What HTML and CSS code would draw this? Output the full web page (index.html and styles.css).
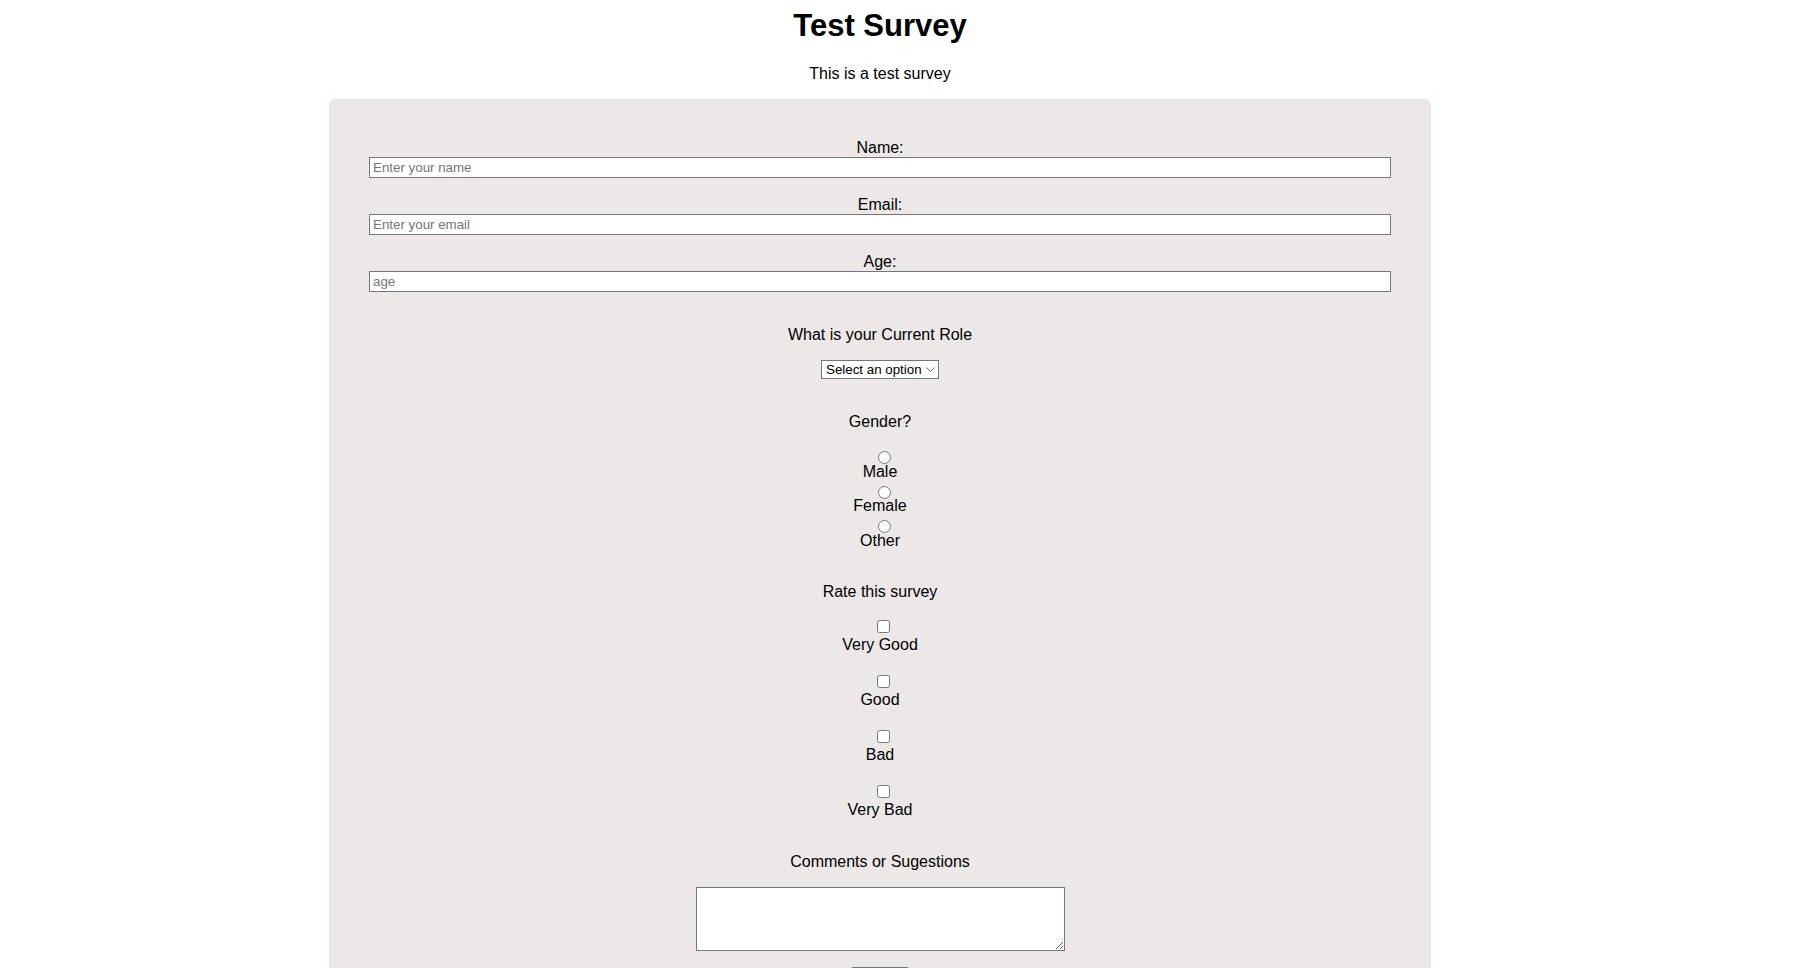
FILE: index.html
```html
<!DOCTYPE html>
<html lang="en">
<head>
<meta charset="utf-8">
<title>Test Survey</title>
<link rel="stylesheet" href="styles.css">
</head>
<body>
<div class="page">
  <header class="header">
    <h1 class="title">Test Survey</h1>
    <p class="description">This is a test survey</p>
  </header>
  <form class="survey">
    <div class="field">
      <label class="field-label" for="name">Name:</label>
      <input class="text-input" id="name" type="text" placeholder="Enter your name">
    </div>
    <div class="field">
      <label class="field-label" for="email">Email:</label>
      <input class="text-input" id="email" type="email" placeholder="Enter your email">
    </div>
    <div class="field">
      <label class="field-label" for="age">Age:</label>
      <input class="text-input" id="age" type="number" placeholder="age">
    </div>

    <div class="question question-role">
      <p class="question-title">What is your Current Role</p>
      <span class="select-wrap">
        <select class="select" id="role">
          <option>Select an option</option>
          <option>Student</option>
          <option>Full Time Job</option>
          <option>Other</option>
        </select>
        <svg class="chevron" width="9" height="5" viewBox="0 0 9 5" aria-hidden="true"><polyline points="0.5,0.5 4.5,4.5 8.5,0.5" fill="none" stroke="#6e6e6e" stroke-width="1"/></svg>
      </span>
    </div>

    <div class="question question-gender">
      <p class="question-title title-gender">Gender?</p>
      <div class="options options-radio">
        <label class="option option-radio"><input class="radio" type="radio" name="gender" value="male"><span class="option-text">Male</span></label>
        <label class="option option-radio"><input class="radio" type="radio" name="gender" value="female"><span class="option-text">Female</span></label>
        <label class="option option-radio"><input class="radio" type="radio" name="gender" value="other"><span class="option-text">Other</span></label>
      </div>
    </div>

    <div class="question question-rate">
      <p class="question-title title-rate">Rate this survey</p>
      <div class="options options-check">
        <label class="option option-check"><input class="checkbox" type="checkbox" value="very-good"><span class="option-text">Very Good</span></label>
        <label class="option option-check"><input class="checkbox" type="checkbox" value="good"><span class="option-text">Good</span></label>
        <label class="option option-check"><input class="checkbox" type="checkbox" value="bad"><span class="option-text">Bad</span></label>
        <label class="option option-check"><input class="checkbox" type="checkbox" value="very-bad"><span class="option-text">Very Bad</span></label>
      </div>
    </div>

    <div class="question question-comments">
      <p class="question-title title-comments">Comments or Sugestions</p>
      <textarea class="textarea" id="comments"></textarea>
    </div>

    <button class="submit" type="submit">Submit</button>
  </form>
</div>
</body>
</html>
```

FILE: styles.css
```css
html {
  scrollbar-width: none;
}

body {
  margin: 0;
  background: #ffffff;
  color: #000000;
  font-family: "Liberation Sans", Arial, sans-serif;
  font-size: 16px;
}

.page {
  width: 1760px;
  padding-bottom: 40px;
}

.header {
  padding-top: 8px;
  text-align: center;
}

.title {
  margin: 0 0 20.5px;
  font-size: 31px;
  line-height: 36px;
  font-weight: 700;
}

.description {
  margin: 0 0 16.5px;
  line-height: 18px;
}

.survey {
  box-sizing: border-box;
  width: 1102px;
  margin: 0 auto;
  padding: 39px 40px 40px;
  background: #ece8e7;
  border-radius: 6px;
  display: flex;
  flex-direction: column;
  align-items: center;
  text-align: center;
}

.field {
  width: 100%;
  display: flex;
  flex-direction: column;
  margin-bottom: 17px;
}

.field:nth-child(3) {
  margin-bottom: 0;
}

.field-label {
  display: block;
  line-height: 19px;
}

.text-input {
  box-sizing: border-box;
  width: 100%;
  height: 21px;
  margin: 0;
  padding: 0 3px;
  border: 1px solid #767676;
  border-radius: 0;
  background: #ffffff;
  font-family: "Liberation Sans", Arial, sans-serif;
  font-size: 13.333px;
  color: #000;
  outline: none;
  -moz-appearance: textfield;
}

.text-input::-webkit-outer-spin-button,
.text-input::-webkit-inner-spin-button {
  -webkit-appearance: none;
  margin: 0;
}

.text-input::placeholder {
  color: #757575;
}

.question {
  display: flex;
  flex-direction: column;
  align-items: center;
}

.question-title {
  margin: 0 0 16px;
  line-height: 18px;
}

.question-role {
  margin-top: 34px;
}

.select-wrap {
  position: relative;
  display: inline-block;
  height: 19px;
}

.select {
  box-sizing: border-box;
  -webkit-appearance: none;
  appearance: none;
  display: block;
  width: 118px;
  height: 19px;
  margin: 0;
  padding: 0 0 0 4px;
  border: 1px solid #767676;
  border-radius: 0;
  background: #ffffff;
  font-family: "Liberation Sans", Arial, sans-serif;
  font-size: 13.333px;
  color: #000;
  outline: none;
}

.chevron {
  position: absolute;
  right: 4px;
  top: 7px;
  pointer-events: none;
}

.question-gender {
  margin-top: 34px;
}

.title-gender {
  margin-bottom: 20px;
}

.options {
  display: flex;
  flex-direction: column;
  align-items: center;
}

.options-radio {
  gap: 5px;
}

.options-check {
  gap: 21px;
}

.option {
  display: flex;
  flex-direction: column;
  align-items: center;
}

.option-text {
  line-height: 18px;
}

.radio {
  width: 13px;
  height: 13px;
  margin: 0 0 -1.5px 10px;
}

.question-rate {
  margin-top: 33.5px;
}

.title-rate {
  margin-bottom: 18.5px;
}

.checkbox {
  width: 13px;
  height: 13px;
  margin: 0 0 3px 8px;
}

.question-comments {
  margin-top: 34px;
}

.title-comments {
  margin-bottom: 16.5px;
}

.textarea {
  box-sizing: border-box;
  display: block;
  width: 369px;
  height: 64px;
  margin: 0;
  padding: 2px;
  border: 1px solid #767676;
  border-radius: 0;
  background: #ffffff;
  font-family: "Liberation Mono", monospace;
  font-size: 13.333px;
  outline: none;
}

.submit {
  box-sizing: border-box;
  margin-top: 16px;
  width: 58px;
  height: 21px;
  padding: 0 6px;
  border: 1px solid #767676;
  border-radius: 2px;
  background: #efefef;
  font-family: "Liberation Sans", Arial, sans-serif;
  font-size: 13.333px;
  color: #000;
}
```
